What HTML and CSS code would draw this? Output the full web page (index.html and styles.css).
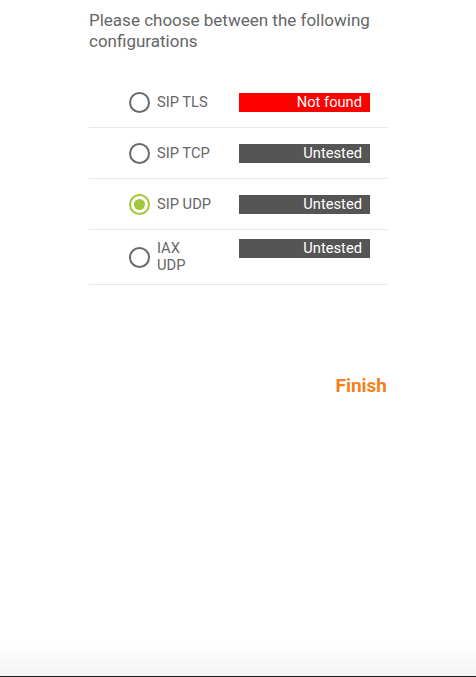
FILE: index.html
```html
<!DOCTYPE html>
<html lang="en">
<head>
    <meta charset="UTF-8">
    <meta name="viewport" content="width=device-width, initial-scale=1.0">
    <title>Configurations</title>
    <link rel="stylesheet" href="styles.css">
</head>
<body>
    <div class="screen">
        <div class="content">
            <div class="title">Please choose between the following configurations</div>

            <div class="config-list">
                <label class="config-row">
                    <span class="radio"></span>
                    <span class="info">
                        <span class="config-name">SIP TLS</span>
                        <span class="status status-fail">Not found</span>
                    </span>
                </label>
                <label class="config-row">
                    <span class="radio"></span>
                    <span class="info">
                        <span class="config-name">SIP TCP</span>
                        <span class="status">Untested</span>
                    </span>
                </label>
                <label class="config-row">
                    <span class="radio checked"></span>
                    <span class="info">
                        <span class="config-name">SIP UDP</span>
                        <span class="status">Untested</span>
                    </span>
                </label>
                <label class="config-row">
                    <span class="radio"></span>
                    <span class="info">
                        <span class="config-name">IAX UDP</span>
                        <span class="status">Untested</span>
                    </span>
                </label>
            </div>

            <div class="actions">
                <button class="finish-btn">Finish</button>
            </div>
        </div>
        <div class="bottom-bar"></div>
    </div>
</body>
</html>
```

FILE: styles.css
```css
* {
    margin: 0;
    padding: 0;
    box-sizing: border-box;
}
body {
    background: #fff;
    font-family: Roboto, "Noto Sans", sans-serif;
    color: #666;
}
.screen {
    display: flex;
    flex-direction: column;
    height: 677px;
}
.content {
    flex: 1;
    width: 298px;
    margin-left: 89px;
}
.title {
    font-size: 17px;
    line-height: 21px;
    padding-top: 10px;
    color: #666;
}
.config-list {
    margin-top: 25px;
}
.config-row {
    display: flex;
    align-items: center;
    min-height: 51px;
    padding: 9px 0 9px 40px;
    border-bottom: 1px solid #e8e8e8;
    cursor: pointer;
}
.radio {
    width: 21px;
    height: 21px;
    border: 2px solid #6a6a6a;
    border-radius: 50%;
    flex-shrink: 0;
    display: flex;
    align-items: center;
    justify-content: center;
}
.radio.checked {
    border-color: #a3c73a;
}
.radio.checked::after {
    content: "";
    width: 11px;
    height: 11px;
    border-radius: 50%;
    background: #a3c73a;
}
.info {
    display: flex;
    align-items: flex-start;
    margin-left: 7px;
}
.config-name {
    width: 54.5px;
    flex-shrink: 0;
    font-size: 14.7px;
    line-height: 17px;
    padding-top: 1px;
    padding-bottom: 1px;
    color: #666;
}
.status {
    width: 131px;
    height: 19px;
    margin-left: 27.5px;
    background: #555;
    color: #fff;
    font-size: 14.7px;
    line-height: 19px;
    text-align: right;
    padding-right: 8px;
}
.status-fail {
    background: #ff0000;
}
.actions {
    display: flex;
    justify-content: flex-end;
    margin-top: 89px;
}
.finish-btn {
    background: none;
    border: none;
    font-family: Roboto, "Noto Sans", sans-serif;
    font-size: 19px;
    font-weight: bold;
    color: #f57f21;
    cursor: pointer;
}
.bottom-bar {
    height: 33px;
    background: linear-gradient(#fff, #f3f3f3);
    border-bottom: 1px solid #1c1c1c;
}
```
